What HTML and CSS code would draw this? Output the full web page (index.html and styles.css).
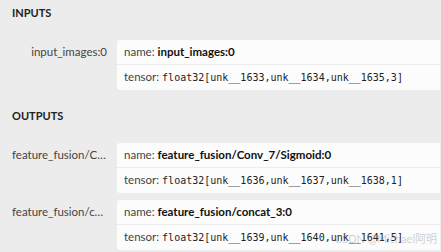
FILE: index.html
```html
<!DOCTYPE html>
<html lang="en">
  <head>
    <meta charset="UTF-8" />
    <title>Model Properties</title>
    <link rel="stylesheet" href="styles.css">
  </head>
  <body>
    <div class="section">
      <div class="section-title">INPUTS</div>
      <div class="rows">
        <div class="row">
          <div class="label">input_images:0</div>
          <div class="card">
            <div class="line">name: <b>input_images:0</b></div>
            <div class="line">tensor: <code>float32[unk__1633,unk__1634,unk__1635,3]</code></div>
          </div>
        </div>
      </div>
    </div>

    <div class="section">
      <div class="section-title">OUTPUTS</div>
      <div class="rows">
        <div class="row">
          <div class="label">feature_fusion/Conv_7/Sigmoid:0</div>
          <div class="card">
            <div class="line">name: <b>feature_fusion/Conv_7/Sigmoid:0</b></div>
            <div class="line">tensor: <code>float32[unk__1636,unk__1637,unk__1638,1]</code></div>
          </div>
        </div>
        <div class="row">
          <div class="label">feature_fusion/concat_3:0</div>
          <div class="card">
            <div class="line">name: <b>feature_fusion/concat_3:0</b></div>
            <div class="line">tensor: <code>float32[unk__1639,unk__1640,unk__1641,5]</code></div>
          </div>
        </div>
      </div>
    </div>

    <div class="watermark">CSDN @Michael阿明</div>
  </body>
</html>
```

FILE: styles.css
```css
body {
  margin: 0;
  padding: 0 1px 0 12px;
  background-color: #ececec;
  font-family: Lato, "Noto Sans CJK SC", sans-serif;
  font-size: 11.5px;
  color: #333;
  overflow: hidden;
}

.section-title {
  font-weight: bold;
  font-size: 11px;
  line-height: 16px;
  padding-top: 5px;
  color: #222;
}

.rows {
  display: flex;
  flex-direction: column;
  gap: 7px;
  margin-top: 19px;
  margin-bottom: 13px;
}

.row {
  display: flex;
  align-items: flex-start;
}

.label {
  width: 95px;
  flex-shrink: 0;
  margin-right: 10px;
  text-align: right;
  line-height: 24px;
  white-space: nowrap;
  overflow: hidden;
  text-overflow: ellipsis;
  color: #444;
}

.card {
  flex: 1;
  background-color: #fcfcfc;
  border-radius: 3px 0 0 3px;
  min-width: 0;
}

.line {
  padding: 0 7px;
  line-height: 24px;
  white-space: nowrap;
  overflow: hidden;
  color: #444;
}

.line + .line {
  border-top: 1px solid #ebebeb;
}

.line b {
  color: #111;
}

.line code {
  font-family: "DejaVu Sans Mono", monospace;
  font-size: 10px;
  color: #222;
}

.watermark {
  position: absolute;
  right: 4px;
  bottom: 6px;
  font-size: 11px;
  color: rgba(120, 120, 120, 0.35);
}
```
